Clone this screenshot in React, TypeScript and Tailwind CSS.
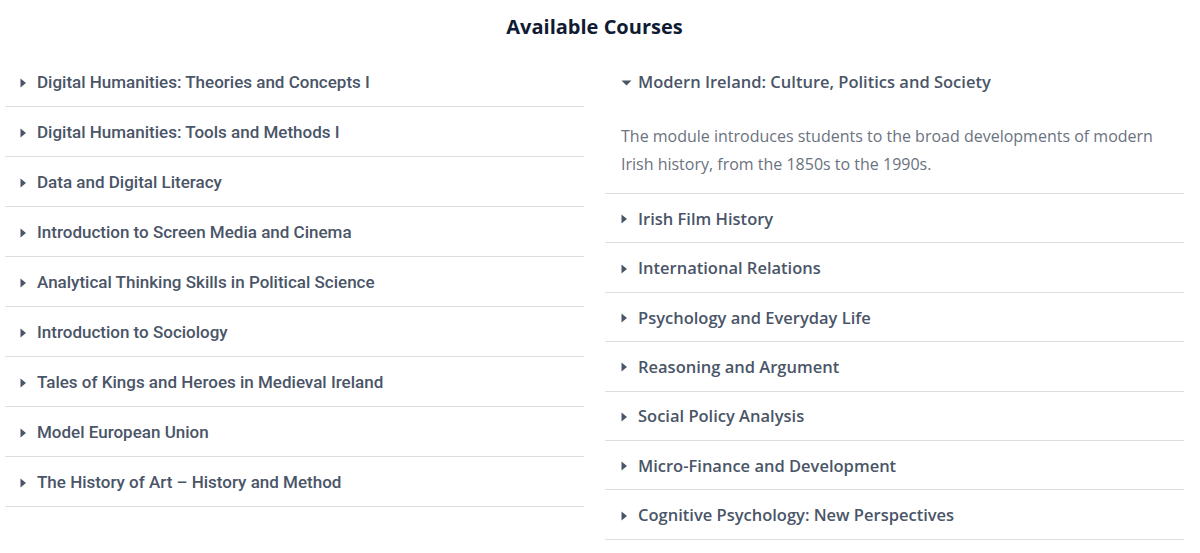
import { useState } from "react";

const leftCourses = [
  "Digital Humanities: Theories and Concepts I",
  "Digital Humanities: Tools and Methods I",
  "Data and Digital Literacy",
  "Introduction to Screen Media and Cinema",
  "Analytical Thinking Skills in Political Science",
  "Introduction to Sociology",
  "Tales of Kings and Heroes in Medieval Ireland",
  "Model European Union",
  "The History of Art – History and Method",
];

const rightCourses = [
  {
    title: "Modern Ireland: Culture, Politics and Society",
    body: "The module introduces students to the broad developments of modern Irish history, from the 1850s to the 1990s.",
  },
  { title: "Irish Film History" },
  { title: "International Relations" },
  { title: "Psychology and Everyday Life" },
  { title: "Reasoning and Argument" },
  { title: "Social Policy Analysis" },
  { title: "Micro-Finance and Development" },
  { title: "Cognitive Psychology: New Perspectives" },
];

function Caret({ open }: { open: boolean }) {
  return open ? (
    <svg width="11" height="10" viewBox="0 0 11 10" className="shrink-0 text-[#4a5568]">
      <path d="M0.5 2.5h10L5.5 7.5z" fill="currentColor" />
    </svg>
  ) : (
    <svg width="11" height="10" viewBox="0 0 11 10" className="shrink-0 text-[#4a5568]">
      <path d="M0.5 0.5v9l5.5-4.5z" fill="currentColor" />
    </svg>
  );
}

export default function App() {
  const [openRight, setOpenRight] = useState(0);

  return (
    <div className="min-h-screen bg-white pl-[5px] pr-[16px]">
      <h1 className="h-[57px] pt-[12px] text-center text-[20px] font-bold leading-[30px] text-[#0f1b33] [font-family:'Open_Sans',sans-serif]">
        Available Courses
      </h1>

      <div className="grid grid-cols-2 gap-[21px]">
        {/* left column - roboto */}
        <div className="[font-family:Roboto,sans-serif]">
          {leftCourses.map((c) => (
            <div key={c} className="border-b border-[#dedede]">
              <button className="flex h-[49px] w-full items-center gap-[6px] pl-[15px] pt-[2px] text-left text-[17px] font-medium text-[#4a5568]">
                <Caret open={false} />
                <span>{c}</span>
              </button>
            </div>
          ))}
        </div>

        {/* right column - open sans */}
        <div className="[font-family:'Open_Sans',sans-serif]">
          {rightCourses.map((c, i) => {
            const open = openRight === i;
            return (
              <div key={c.title} className={open ? "border-b border-[#dedede]" : i === 0 ? "" : "border-b border-[#dedede]"}>
                <button
                  onClick={() => setOpenRight(open ? -1 : i)}
                  className={`flex w-full items-center gap-[6px] pl-[16px] pt-[2px] text-left text-[16.5px] font-semibold text-[#4a5568] ${i === 0 ? "h-[49px]" : "h-[48.4px]"}`}
                >
                  <Caret open={open} />
                  <span>{c.title}</span>
                </button>
                {open && c.body && (
                  <p className="px-[16px] pb-[15px] pt-[16px] text-[16px] font-normal leading-[28px] text-[#6b7280]">
                    {c.body}
                  </p>
                )}
              </div>
            );
          })}
        </div>
      </div>
    </div>
  );
}
